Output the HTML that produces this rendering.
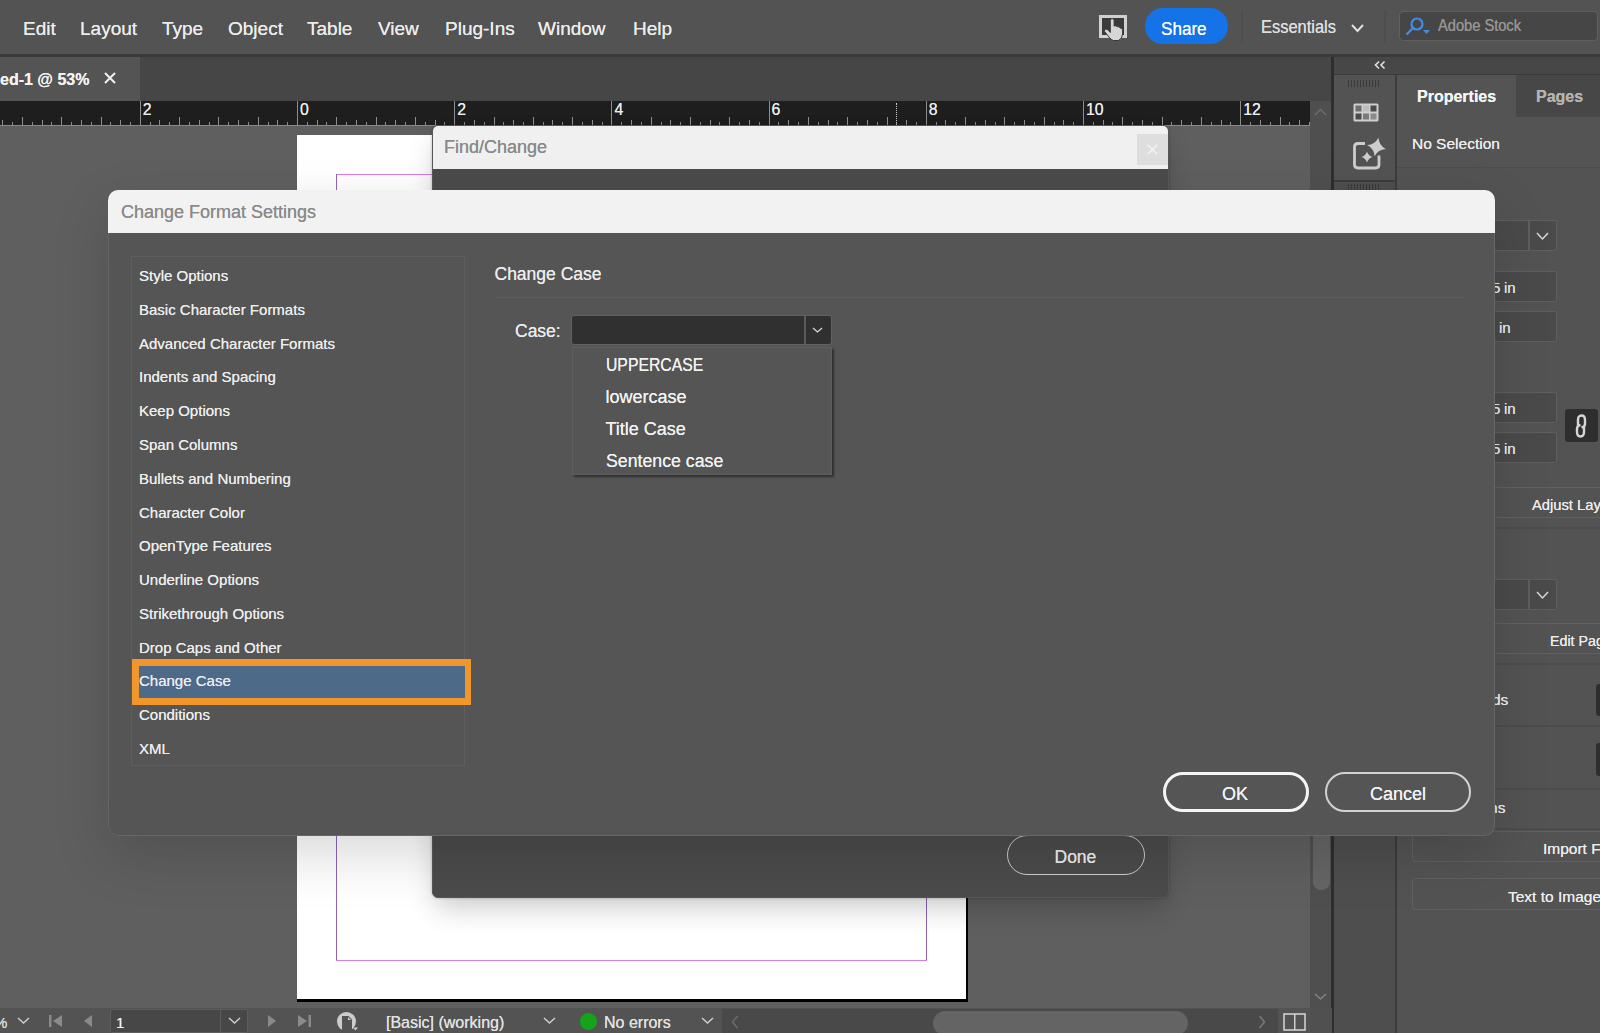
<!DOCTYPE html>
<html><head><meta charset="utf-8">
<style>
*{box-sizing:border-box;margin:0;padding:0}
html,body{width:1600px;height:1033px;overflow:hidden;background:#5e5e5e;font-family:"Liberation Sans", sans-serif;color:#e8e8e8}
.a{position:absolute}
.t{position:absolute;white-space:nowrap;line-height:1;text-shadow:0 0 .45px currentColor}
svg{position:absolute;overflow:visible}
</style></head><body>
<div class="a" style="left:0px;top:101px;width:1310px;height:910px;background:#5f5f5f;"></div>
<div class="a" style="left:297px;top:135px;width:671px;height:867px;background:#000;"></div>
<div class="a" style="left:297px;top:135px;width:669px;height:864px;background:#fff;"></div>
<div class="a" style="left:336px;top:174px;width:591px;height:1.3px;background:#e07af0;"></div>
<div class="a" style="left:336px;top:959.5px;width:591px;height:1px;background:#d27ee6;"></div>
<div class="a" style="left:335.8px;top:174px;width:1.2px;height:786px;background:#8e64b8;"></div>
<div class="a" style="left:925.8px;top:174px;width:1.2px;height:786px;background:#8e64b8;"></div>
<div class="a" style="left:0px;top:101px;width:1310px;height:25px;background:#1e1e1e;"></div>
<div class="a" style="left:2.25px;top:120.00px;width:1px;height:5px;background:#8e8e8e"></div><div class="a" style="left:12.08px;top:121.50px;width:1px;height:3.5px;background:#8e8e8e"></div><div class="a" style="left:21.90px;top:116.50px;width:1px;height:8.5px;background:#8e8e8e"></div><div class="a" style="left:31.73px;top:121.50px;width:1px;height:3.5px;background:#8e8e8e"></div><div class="a" style="left:41.55px;top:120.00px;width:1px;height:5px;background:#8e8e8e"></div><div class="a" style="left:51.38px;top:121.50px;width:1px;height:3.5px;background:#8e8e8e"></div><div class="a" style="left:61.20px;top:116.50px;width:1px;height:8.5px;background:#8e8e8e"></div><div class="a" style="left:71.03px;top:121.50px;width:1px;height:3.5px;background:#8e8e8e"></div><div class="a" style="left:80.85px;top:120.00px;width:1px;height:5px;background:#8e8e8e"></div><div class="a" style="left:90.68px;top:121.50px;width:1px;height:3.5px;background:#8e8e8e"></div><div class="a" style="left:100.50px;top:116.50px;width:1px;height:8.5px;background:#8e8e8e"></div><div class="a" style="left:110.33px;top:121.50px;width:1px;height:3.5px;background:#8e8e8e"></div><div class="a" style="left:120.15px;top:120.00px;width:1px;height:5px;background:#8e8e8e"></div><div class="a" style="left:129.98px;top:121.50px;width:1px;height:3.5px;background:#8e8e8e"></div><div class="a" style="left:139.80px;top:101.00px;width:1px;height:24px;background:#8e8e8e"></div><div class="a" style="left:149.62px;top:121.50px;width:1px;height:3.5px;background:#8e8e8e"></div><div class="a" style="left:159.45px;top:120.00px;width:1px;height:5px;background:#8e8e8e"></div><div class="a" style="left:169.28px;top:121.50px;width:1px;height:3.5px;background:#8e8e8e"></div><div class="a" style="left:179.10px;top:116.50px;width:1px;height:8.5px;background:#8e8e8e"></div><div class="a" style="left:188.93px;top:121.50px;width:1px;height:3.5px;background:#8e8e8e"></div><div class="a" style="left:198.75px;top:120.00px;width:1px;height:5px;background:#8e8e8e"></div><div class="a" style="left:208.57px;top:121.50px;width:1px;height:3.5px;background:#8e8e8e"></div><div class="a" style="left:218.40px;top:116.50px;width:1px;height:8.5px;background:#8e8e8e"></div><div class="a" style="left:228.23px;top:121.50px;width:1px;height:3.5px;background:#8e8e8e"></div><div class="a" style="left:238.05px;top:120.00px;width:1px;height:5px;background:#8e8e8e"></div><div class="a" style="left:247.88px;top:121.50px;width:1px;height:3.5px;background:#8e8e8e"></div><div class="a" style="left:257.70px;top:116.50px;width:1px;height:8.5px;background:#8e8e8e"></div><div class="a" style="left:267.52px;top:121.50px;width:1px;height:3.5px;background:#8e8e8e"></div><div class="a" style="left:277.35px;top:120.00px;width:1px;height:5px;background:#8e8e8e"></div><div class="a" style="left:287.18px;top:121.50px;width:1px;height:3.5px;background:#8e8e8e"></div><div class="a" style="left:297.00px;top:101.00px;width:1px;height:24px;background:#8e8e8e"></div><div class="a" style="left:306.82px;top:121.50px;width:1px;height:3.5px;background:#8e8e8e"></div><div class="a" style="left:316.65px;top:120.00px;width:1px;height:5px;background:#8e8e8e"></div><div class="a" style="left:326.48px;top:121.50px;width:1px;height:3.5px;background:#8e8e8e"></div><div class="a" style="left:336.30px;top:116.50px;width:1px;height:8.5px;background:#8e8e8e"></div><div class="a" style="left:346.12px;top:121.50px;width:1px;height:3.5px;background:#8e8e8e"></div><div class="a" style="left:355.95px;top:120.00px;width:1px;height:5px;background:#8e8e8e"></div><div class="a" style="left:365.77px;top:121.50px;width:1px;height:3.5px;background:#8e8e8e"></div><div class="a" style="left:375.60px;top:116.50px;width:1px;height:8.5px;background:#8e8e8e"></div><div class="a" style="left:385.43px;top:121.50px;width:1px;height:3.5px;background:#8e8e8e"></div><div class="a" style="left:395.25px;top:120.00px;width:1px;height:5px;background:#8e8e8e"></div><div class="a" style="left:405.07px;top:121.50px;width:1px;height:3.5px;background:#8e8e8e"></div><div class="a" style="left:414.90px;top:116.50px;width:1px;height:8.5px;background:#8e8e8e"></div><div class="a" style="left:424.73px;top:121.50px;width:1px;height:3.5px;background:#8e8e8e"></div><div class="a" style="left:434.55px;top:120.00px;width:1px;height:5px;background:#8e8e8e"></div><div class="a" style="left:444.38px;top:121.50px;width:1px;height:3.5px;background:#8e8e8e"></div><div class="a" style="left:454.20px;top:101.00px;width:1px;height:24px;background:#8e8e8e"></div><div class="a" style="left:464.02px;top:121.50px;width:1px;height:3.5px;background:#8e8e8e"></div><div class="a" style="left:473.85px;top:120.00px;width:1px;height:5px;background:#8e8e8e"></div><div class="a" style="left:483.67px;top:121.50px;width:1px;height:3.5px;background:#8e8e8e"></div><div class="a" style="left:493.50px;top:116.50px;width:1px;height:8.5px;background:#8e8e8e"></div><div class="a" style="left:503.32px;top:121.50px;width:1px;height:3.5px;background:#8e8e8e"></div><div class="a" style="left:513.15px;top:120.00px;width:1px;height:5px;background:#8e8e8e"></div><div class="a" style="left:522.98px;top:121.50px;width:1px;height:3.5px;background:#8e8e8e"></div><div class="a" style="left:532.80px;top:116.50px;width:1px;height:8.5px;background:#8e8e8e"></div><div class="a" style="left:542.62px;top:121.50px;width:1px;height:3.5px;background:#8e8e8e"></div><div class="a" style="left:552.45px;top:120.00px;width:1px;height:5px;background:#8e8e8e"></div><div class="a" style="left:562.27px;top:121.50px;width:1px;height:3.5px;background:#8e8e8e"></div><div class="a" style="left:572.10px;top:116.50px;width:1px;height:8.5px;background:#8e8e8e"></div><div class="a" style="left:581.92px;top:121.50px;width:1px;height:3.5px;background:#8e8e8e"></div><div class="a" style="left:591.75px;top:120.00px;width:1px;height:5px;background:#8e8e8e"></div><div class="a" style="left:601.58px;top:121.50px;width:1px;height:3.5px;background:#8e8e8e"></div><div class="a" style="left:611.40px;top:101.00px;width:1px;height:24px;background:#8e8e8e"></div><div class="a" style="left:621.22px;top:121.50px;width:1px;height:3.5px;background:#8e8e8e"></div><div class="a" style="left:631.05px;top:120.00px;width:1px;height:5px;background:#8e8e8e"></div><div class="a" style="left:640.88px;top:121.50px;width:1px;height:3.5px;background:#8e8e8e"></div><div class="a" style="left:650.70px;top:116.50px;width:1px;height:8.5px;background:#8e8e8e"></div><div class="a" style="left:660.52px;top:121.50px;width:1px;height:3.5px;background:#8e8e8e"></div><div class="a" style="left:670.35px;top:120.00px;width:1px;height:5px;background:#8e8e8e"></div><div class="a" style="left:680.17px;top:121.50px;width:1px;height:3.5px;background:#8e8e8e"></div><div class="a" style="left:690.00px;top:116.50px;width:1px;height:8.5px;background:#8e8e8e"></div><div class="a" style="left:699.83px;top:121.50px;width:1px;height:3.5px;background:#8e8e8e"></div><div class="a" style="left:709.65px;top:120.00px;width:1px;height:5px;background:#8e8e8e"></div><div class="a" style="left:719.47px;top:121.50px;width:1px;height:3.5px;background:#8e8e8e"></div><div class="a" style="left:729.30px;top:116.50px;width:1px;height:8.5px;background:#8e8e8e"></div><div class="a" style="left:739.12px;top:121.50px;width:1px;height:3.5px;background:#8e8e8e"></div><div class="a" style="left:748.95px;top:120.00px;width:1px;height:5px;background:#8e8e8e"></div><div class="a" style="left:758.77px;top:121.50px;width:1px;height:3.5px;background:#8e8e8e"></div><div class="a" style="left:768.60px;top:101.00px;width:1px;height:24px;background:#8e8e8e"></div><div class="a" style="left:778.42px;top:121.50px;width:1px;height:3.5px;background:#8e8e8e"></div><div class="a" style="left:788.25px;top:120.00px;width:1px;height:5px;background:#8e8e8e"></div><div class="a" style="left:798.08px;top:121.50px;width:1px;height:3.5px;background:#8e8e8e"></div><div class="a" style="left:807.90px;top:116.50px;width:1px;height:8.5px;background:#8e8e8e"></div><div class="a" style="left:817.72px;top:121.50px;width:1px;height:3.5px;background:#8e8e8e"></div><div class="a" style="left:827.55px;top:120.00px;width:1px;height:5px;background:#8e8e8e"></div><div class="a" style="left:837.38px;top:121.50px;width:1px;height:3.5px;background:#8e8e8e"></div><div class="a" style="left:847.20px;top:116.50px;width:1px;height:8.5px;background:#8e8e8e"></div><div class="a" style="left:857.02px;top:121.50px;width:1px;height:3.5px;background:#8e8e8e"></div><div class="a" style="left:866.85px;top:120.00px;width:1px;height:5px;background:#8e8e8e"></div><div class="a" style="left:876.67px;top:121.50px;width:1px;height:3.5px;background:#8e8e8e"></div><div class="a" style="left:886.50px;top:116.50px;width:1px;height:8.5px;background:#8e8e8e"></div><div class="a" style="left:896.32px;top:121.50px;width:1px;height:3.5px;background:#8e8e8e"></div><div class="a" style="left:906.15px;top:120.00px;width:1px;height:5px;background:#8e8e8e"></div><div class="a" style="left:915.97px;top:121.50px;width:1px;height:3.5px;background:#8e8e8e"></div><div class="a" style="left:925.80px;top:101.00px;width:1px;height:24px;background:#8e8e8e"></div><div class="a" style="left:935.62px;top:121.50px;width:1px;height:3.5px;background:#8e8e8e"></div><div class="a" style="left:945.45px;top:120.00px;width:1px;height:5px;background:#8e8e8e"></div><div class="a" style="left:955.27px;top:121.50px;width:1px;height:3.5px;background:#8e8e8e"></div><div class="a" style="left:965.10px;top:116.50px;width:1px;height:8.5px;background:#8e8e8e"></div><div class="a" style="left:974.92px;top:121.50px;width:1px;height:3.5px;background:#8e8e8e"></div><div class="a" style="left:984.75px;top:120.00px;width:1px;height:5px;background:#8e8e8e"></div><div class="a" style="left:994.57px;top:121.50px;width:1px;height:3.5px;background:#8e8e8e"></div><div class="a" style="left:1004.40px;top:116.50px;width:1px;height:8.5px;background:#8e8e8e"></div><div class="a" style="left:1014.22px;top:121.50px;width:1px;height:3.5px;background:#8e8e8e"></div><div class="a" style="left:1024.05px;top:120.00px;width:1px;height:5px;background:#8e8e8e"></div><div class="a" style="left:1033.88px;top:121.50px;width:1px;height:3.5px;background:#8e8e8e"></div><div class="a" style="left:1043.70px;top:116.50px;width:1px;height:8.5px;background:#8e8e8e"></div><div class="a" style="left:1053.53px;top:121.50px;width:1px;height:3.5px;background:#8e8e8e"></div><div class="a" style="left:1063.35px;top:120.00px;width:1px;height:5px;background:#8e8e8e"></div><div class="a" style="left:1073.17px;top:121.50px;width:1px;height:3.5px;background:#8e8e8e"></div><div class="a" style="left:1083.00px;top:101.00px;width:1px;height:24px;background:#8e8e8e"></div><div class="a" style="left:1092.82px;top:121.50px;width:1px;height:3.5px;background:#8e8e8e"></div><div class="a" style="left:1102.65px;top:120.00px;width:1px;height:5px;background:#8e8e8e"></div><div class="a" style="left:1112.47px;top:121.50px;width:1px;height:3.5px;background:#8e8e8e"></div><div class="a" style="left:1122.30px;top:116.50px;width:1px;height:8.5px;background:#8e8e8e"></div><div class="a" style="left:1132.12px;top:121.50px;width:1px;height:3.5px;background:#8e8e8e"></div><div class="a" style="left:1141.95px;top:120.00px;width:1px;height:5px;background:#8e8e8e"></div><div class="a" style="left:1151.78px;top:121.50px;width:1px;height:3.5px;background:#8e8e8e"></div><div class="a" style="left:1161.60px;top:116.50px;width:1px;height:8.5px;background:#8e8e8e"></div><div class="a" style="left:1171.42px;top:121.50px;width:1px;height:3.5px;background:#8e8e8e"></div><div class="a" style="left:1181.25px;top:120.00px;width:1px;height:5px;background:#8e8e8e"></div><div class="a" style="left:1191.07px;top:121.50px;width:1px;height:3.5px;background:#8e8e8e"></div><div class="a" style="left:1200.90px;top:116.50px;width:1px;height:8.5px;background:#8e8e8e"></div><div class="a" style="left:1210.72px;top:121.50px;width:1px;height:3.5px;background:#8e8e8e"></div><div class="a" style="left:1220.55px;top:120.00px;width:1px;height:5px;background:#8e8e8e"></div><div class="a" style="left:1230.38px;top:121.50px;width:1px;height:3.5px;background:#8e8e8e"></div><div class="a" style="left:1240.20px;top:101.00px;width:1px;height:24px;background:#8e8e8e"></div><div class="a" style="left:1250.03px;top:121.50px;width:1px;height:3.5px;background:#8e8e8e"></div><div class="a" style="left:1259.85px;top:120.00px;width:1px;height:5px;background:#8e8e8e"></div><div class="a" style="left:1269.67px;top:121.50px;width:1px;height:3.5px;background:#8e8e8e"></div><div class="a" style="left:1279.50px;top:116.50px;width:1px;height:8.5px;background:#8e8e8e"></div><div class="a" style="left:1289.32px;top:121.50px;width:1px;height:3.5px;background:#8e8e8e"></div><div class="a" style="left:1299.15px;top:120.00px;width:1px;height:5px;background:#8e8e8e"></div><div class="a" style="left:1308.97px;top:121.50px;width:1px;height:3.5px;background:#8e8e8e"></div>
<div class="t" style="left:142.8px;top:102.43px;font-size:15.8px;color:#ececec;font-weight:400;">2</div>
<div class="t" style="left:300.0px;top:102.43px;font-size:15.8px;color:#ececec;font-weight:400;">0</div>
<div class="t" style="left:457.2px;top:102.43px;font-size:15.8px;color:#ececec;font-weight:400;">2</div>
<div class="t" style="left:614.4px;top:102.43px;font-size:15.8px;color:#ececec;font-weight:400;">4</div>
<div class="t" style="left:771.5999999999999px;top:102.43px;font-size:15.8px;color:#ececec;font-weight:400;">6</div>
<div class="t" style="left:928.8px;top:102.43px;font-size:15.8px;color:#ececec;font-weight:400;">8</div>
<div class="t" style="left:1086.0px;top:102.43px;font-size:15.8px;color:#ececec;font-weight:400;">10</div>
<div class="t" style="left:1243.1999999999998px;top:102.43px;font-size:15.8px;color:#ececec;font-weight:400;">12</div>
<div class="a" style="left:896px;top:103px;width:1px;height:22px;border-left:1px dotted #cfcfcf"></div>
<div class="a" style="left:0px;top:125px;width:1310px;height:1px;background:#8a8a8a;"></div>
<div class="a" style="left:0px;top:0px;width:1600px;height:54px;background:#535353;"></div>
<div class="a" style="left:0px;top:54px;width:1600px;height:3px;background:#3a3a3a;"></div>
<div class="t" style="left:23px;top:18.92px;font-size:19px;color:#ececec;font-weight:400;">Edit</div>
<div class="t" style="left:80px;top:18.92px;font-size:19px;color:#ececec;font-weight:400;">Layout</div>
<div class="t" style="left:162px;top:18.92px;font-size:19px;color:#ececec;font-weight:400;">Type</div>
<div class="t" style="left:228px;top:18.92px;font-size:19px;color:#ececec;font-weight:400;">Object</div>
<div class="t" style="left:307px;top:18.92px;font-size:19px;color:#ececec;font-weight:400;">Table</div>
<div class="t" style="left:378px;top:18.92px;font-size:19px;color:#ececec;font-weight:400;">View</div>
<div class="t" style="left:445px;top:18.92px;font-size:19px;color:#ececec;font-weight:400;">Plug-Ins</div>
<div class="t" style="left:538px;top:18.92px;font-size:19px;color:#ececec;font-weight:400;">Window</div>
<div class="t" style="left:633px;top:18.92px;font-size:19px;color:#ececec;font-weight:400;">Help</div>
<div class="a" style="left:1145px;top:8px;width:83px;height:36px;background:#1473e6;border-radius:18px"></div>
<div class="t" style="left:1161px;top:18.92px;font-size:19px;color:#ffffff;font-weight:400;transform:scaleX(0.9);transform-origin:0 0;">Share</div>
<div class="a" style="left:1241px;top:10px;width:2px;height:33px;background:#4e4e4e;"></div>
<div class="t" style="left:1261px;top:16.92px;font-size:19px;color:#dedede;font-weight:400;transform:scaleX(0.866);transform-origin:0 0;">Essentials</div>
<div class="a" style="left:1384px;top:10px;width:2px;height:33px;background:#4e4e4e;"></div>
<svg style="left:1351px;top:24px" width="13" height="9" viewBox="0 0 13 9"><path d="M1 1 L6.5 7 L12 1" fill="none" stroke="#e0e0e0" stroke-width="2"/></svg>
<svg style="left:1098px;top:14px" width="31" height="26" viewBox="0 0 31 26"><rect x="2.5" y="2.5" width="25" height="20" fill="#3a3a3a" stroke="#d0d0d0" stroke-width="3"/><path d="M12.3 6.5 Q12.3 4.6 14.2 4.6 Q16.1 4.6 16.1 6.5 V12 Q18.3 11 19.2 12.8 Q21.3 12 22 14 Q24.3 13.6 24.6 16 V20 Q24.4 24.8 20.4 26.5 H15.4 Q12.8 26 11 23 L6.6 17.6 Q6 15.8 7.6 15.2 Q9.2 14.9 10.4 16.4 L12.3 18.5 Z" fill="#d6d6d6" stroke="#3a3a3a" stroke-width="1"/></svg>
<div class="a" style="left:1399px;top:11px;width:199px;height:30px;border:1.5px solid #606060;border-radius:4px;background:#464646"></div>
<div class="t" style="left:1438px;top:18.46px;font-size:16px;color:#959595;font-weight:400;transform:scaleX(0.915);transform-origin:0 0;">Adobe Stock</div>
<svg style="left:1404px;top:16px" width="28" height="20" viewBox="0 0 28 20"><circle cx="13" cy="8" r="5.5" fill="none" stroke="#3f8de6" stroke-width="2.2"/><path d="M9 12 L2.5 18.5" stroke="#3f8de6" stroke-width="2.4"/><path d="M19 14 L26 14 L22.5 18 Z" fill="#3f8de6"/></svg>
<div class="a" style="left:0px;top:57px;width:1332px;height:44px;background:#464646;"></div>
<div class="a" style="left:0px;top:57px;width:140px;height:44px;background:#545454;"></div>
<div class="t" style="left:0px;top:72.46px;font-size:16px;color:#f2f2f2;font-weight:700;">ed-1 @ 53%</div>
<svg style="left:104px;top:72px" width="12" height="12" viewBox="0 0 12 12"><path d="M1 1 L11 11 M11 1 L1 11" stroke="#f0f0f0" stroke-width="2"/></svg>
<div class="a" style="left:1310px;top:101px;width:22px;height:910px;background:#4f4f4f;"></div>
<div class="a" style="left:1313px;top:700px;width:17px;height:190px;background:#656565;border-radius:8px"></div>
<svg style="left:1314px;top:108px" width="13" height="8" viewBox="0 0 13 8"><path d="M1 7 L6.5 1.5 L12 7" fill="none" stroke="#6e6e6e" stroke-width="1.3"/></svg>
<svg style="left:1314px;top:993px" width="13" height="8" viewBox="0 0 13 8"><path d="M1 1 L6.5 6 L12 1" fill="none" stroke="#8a8a8a" stroke-width="1.2"/></svg>
<div class="a" style="left:1332px;top:57px;width:268px;height:976px;background:#545454;"></div>
<div class="a" style="left:1331px;top:57px;width:3px;height:976px;background:#2e2e2e;"></div>
<div class="a" style="left:1334px;top:57px;width:266px;height:17px;background:#474747;"></div>
<svg style="left:1374px;top:60px" width="12" height="10" viewBox="0 0 12 10"><path d="M5 1.5 L1.5 5 L5 8.5 M10.5 1.5 L7 5 L10.5 8.5" fill="none" stroke="#e0e0e0" stroke-width="1.6"/></svg>
<div class="a" style="left:1334px;top:74px;width:266px;height:1px;background:#3a3a3a;"></div>
<div class="a" style="left:1334px;top:75px;width:61px;height:105px;background:#535353;"></div>
<div class="a" style="left:1395px;top:75px;width:2px;height:958px;background:#3c3c3c;"></div>
<div class="a" style="left:1334px;top:180px;width:61px;height:2px;background:#3c3c3c;"></div>
<div class="a" style="left:1334px;top:182px;width:61px;height:851px;background:#4e4e4e;"></div>
<div class="a" style="left:1348px;top:80px;width:1px;height:7px;background:#3a3a3a"></div><div class="a" style="left:1351px;top:80px;width:1px;height:7px;background:#3a3a3a"></div><div class="a" style="left:1354px;top:80px;width:1px;height:7px;background:#3a3a3a"></div><div class="a" style="left:1357px;top:80px;width:1px;height:7px;background:#3a3a3a"></div><div class="a" style="left:1360px;top:80px;width:1px;height:7px;background:#3a3a3a"></div><div class="a" style="left:1363px;top:80px;width:1px;height:7px;background:#3a3a3a"></div><div class="a" style="left:1366px;top:80px;width:1px;height:7px;background:#3a3a3a"></div><div class="a" style="left:1369px;top:80px;width:1px;height:7px;background:#3a3a3a"></div><div class="a" style="left:1372px;top:80px;width:1px;height:7px;background:#3a3a3a"></div><div class="a" style="left:1375px;top:80px;width:1px;height:7px;background:#3a3a3a"></div><div class="a" style="left:1378px;top:80px;width:1px;height:7px;background:#3a3a3a"></div>
<div class="a" style="left:1348px;top:184px;width:1px;height:6px;background:#3a3a3a"></div><div class="a" style="left:1351px;top:184px;width:1px;height:6px;background:#3a3a3a"></div><div class="a" style="left:1354px;top:184px;width:1px;height:6px;background:#3a3a3a"></div><div class="a" style="left:1357px;top:184px;width:1px;height:6px;background:#3a3a3a"></div><div class="a" style="left:1360px;top:184px;width:1px;height:6px;background:#3a3a3a"></div><div class="a" style="left:1363px;top:184px;width:1px;height:6px;background:#3a3a3a"></div><div class="a" style="left:1366px;top:184px;width:1px;height:6px;background:#3a3a3a"></div><div class="a" style="left:1369px;top:184px;width:1px;height:6px;background:#3a3a3a"></div><div class="a" style="left:1372px;top:184px;width:1px;height:6px;background:#3a3a3a"></div><div class="a" style="left:1375px;top:184px;width:1px;height:6px;background:#3a3a3a"></div><div class="a" style="left:1378px;top:184px;width:1px;height:6px;background:#3a3a3a"></div>
<svg style="left:1353px;top:103px" width="26" height="19" viewBox="0 0 26 19"><rect x="0.5" y="0.5" width="25" height="18" rx="1.5" fill="#cfcfcf"/><rect x="2.5" y="2.5" width="6" height="6" fill="#6e6e6e"/><rect x="10" y="2.5" width="6" height="6" fill="#bdbdbd"/><rect x="17.5" y="2.5" width="6" height="6" fill="#4a4a4a"/><rect x="2.5" y="10.5" width="6" height="6" fill="#4a4a4a"/><rect x="10" y="10.5" width="6" height="6" fill="#7a7a7a"/><rect x="17.5" y="10.5" width="6" height="6" fill="#8a8a8a"/></svg>
<svg style="left:1350px;top:136px" width="38" height="36" viewBox="0 0 38 36"><path d="M15 7.5 H8 Q4.5 7.5 4.5 11 V28.5 Q4.5 32 8 32 H25.5 Q29 32 29 28.5 V19.5" fill="none" stroke="#cdcdcd" stroke-width="2.8"/><path d="M26.5 1.5 Q28.59 8.91 36.0 11 Q28.59 13.09 26.5 20.5 Q24.41 13.09 17.0 11 Q24.41 8.91 26.5 1.5 Z" fill="#cdcdcd" transform="rotate(12 26.5 11)"/><path d="M17 15.5 Q18.375 19.625 22.5 21 Q18.375 22.375 17 26.5 Q15.625 22.375 11.5 21 Q15.625 19.625 17 15.5 Z" fill="#cdcdcd"/></svg>
<div class="a" style="left:1397px;top:75px;width:203px;height:42px;background:#474747;"></div>
<div class="a" style="left:1397px;top:75px;width:119px;height:42px;background:#545454;"></div>
<div class="t" style="left:1417px;top:89.46px;font-size:16px;color:#f4f4f4;font-weight:700;">Properties</div>
<div class="t" style="left:1536px;top:89.46px;font-size:16px;color:#b4b4b4;font-weight:700;">Pages</div>
<div class="t" style="left:1412px;top:135.88px;font-size:15.5px;color:#ececec;font-weight:400;">No Selection</div>
<div class="a" style="left:1397px;top:167px;width:203px;height:1px;background:#4c4c4c;"></div>
<div class="a" style="left:1397px;top:168px;width:203px;height:865px;background:#535353;"></div>
<div class="a" style="left:1470px;top:220px;width:87px;height:31px;background:#4a4a4a;border:1.5px solid #5f5f5f;border-radius:3px"></div>
<div class="a" style="left:1528px;top:221px;width:1.5px;height:29px;background:#5f5f5f;"></div>
<svg style="left:1536px;top:232px" width="13" height="9" viewBox="0 0 13 9"><path d="M1 1 L6.5 7 L12 1" fill="none" stroke="#d8d8d8" stroke-width="1.5"/></svg>
<div class="a" style="left:1470px;top:271px;width:87px;height:31px;background:#4a4a4a;border:1.5px solid #5f5f5f;border-radius:3px"></div>
<div class="a" style="left:1470px;top:311px;width:87px;height:31px;background:#4a4a4a;border:1.5px solid #5f5f5f;border-radius:3px"></div>
<div class="a" style="left:1470px;top:392px;width:87px;height:31px;background:#4a4a4a;border:1.5px solid #5f5f5f;border-radius:3px"></div>
<div class="a" style="left:1470px;top:432px;width:87px;height:31px;background:#4a4a4a;border:1.5px solid #5f5f5f;border-radius:3px"></div>
<div class="t" style="left:1504px;top:280.30px;font-size:15px;color:#e8e8e8;font-weight:400;">in</div>
<div class="t" style="left:1492px;top:280.30px;font-size:15px;color:#e8e8e8;font-weight:400;">5</div>
<div class="t" style="left:1499px;top:320.30px;font-size:15px;color:#e8e8e8;font-weight:400;">in</div>
<div class="t" style="left:1504px;top:401.30px;font-size:15px;color:#e8e8e8;font-weight:400;">in</div>
<div class="t" style="left:1492px;top:401.30px;font-size:15px;color:#e8e8e8;font-weight:400;">5</div>
<div class="t" style="left:1504px;top:441.30px;font-size:15px;color:#e8e8e8;font-weight:400;">in</div>
<div class="t" style="left:1492px;top:441.30px;font-size:15px;color:#e8e8e8;font-weight:400;">5</div>
<div class="a" style="left:1565px;top:409px;width:33px;height:33px;background:#2e2e2e;border-radius:3px"></div>
<svg style="left:1572px;top:413px" width="18" height="26" viewBox="0 0 18 26"><path d="M6 12.5 V7 Q6 2.5 9.5 2.5 Q13 2.5 13 7 V11 Q13 13.5 9.5 14.5" fill="none" stroke="#d6d6d6" stroke-width="2.4"/><path d="M12 13 V19 Q12 23.5 8.5 23.5 Q5 23.5 5 19 V15.5 Q5 12.8 8.5 11.8" fill="none" stroke="#d6d6d6" stroke-width="2.4"/></svg>
<div class="a" style="left:1412px;top:487px;width:200px;height:31px;border:1.5px solid #616161;border-radius:3px"></div>
<div class="t" style="left:1532px;top:496.88px;font-size:15.5px;color:#ececec;font-weight:400;transform:scaleX(0.95);transform-origin:0 0;">Adjust Layout</div>
<div class="a" style="left:1397px;top:527px;width:203px;height:2px;background:#4c4c4c;"></div>
<div class="a" style="left:1470px;top:579px;width:87px;height:31px;background:#4a4a4a;border:1.5px solid #5f5f5f;border-radius:3px"></div>
<div class="a" style="left:1528px;top:580px;width:1.5px;height:29px;background:#5f5f5f;"></div>
<svg style="left:1536px;top:591px" width="13" height="9" viewBox="0 0 13 9"><path d="M1 1 L6.5 7 L12 1" fill="none" stroke="#d8d8d8" stroke-width="1.5"/></svg>
<div class="a" style="left:1412px;top:623px;width:200px;height:31px;border:1.5px solid #616161;border-radius:3px"></div>
<div class="t" style="left:1550px;top:632.88px;font-size:15.5px;color:#ececec;font-weight:400;transform:scaleX(0.92);transform-origin:0 0;">Edit Page</div>
<div class="a" style="left:1397px;top:663px;width:203px;height:2px;background:#4c4c4c;"></div>
<div class="t" style="left:1407.5px;top:691.88px;font-size:15.5px;color:#ececec;font-weight:400;">Rulers &amp; Grids</div>
<div class="a" style="left:1596px;top:684px;width:6px;height:32px;background:#2e2e2e;border-radius:3px"></div>
<div class="a" style="left:1397px;top:725px;width:203px;height:1.5px;background:#4c4c4c;"></div>
<div class="a" style="left:1596px;top:743px;width:6px;height:33px;background:#2e2e2e;border-radius:3px"></div>
<div class="a" style="left:1397px;top:788px;width:203px;height:1.5px;background:#4c4c4c;"></div>
<div class="t" style="left:1411.5px;top:799.88px;font-size:15.5px;color:#ececec;font-weight:400;">Quick Actions</div>
<div class="a" style="left:1397px;top:828px;width:203px;height:1.5px;background:#4c4c4c;"></div>
<div class="a" style="left:1412px;top:831px;width:200px;height:31px;border:1.5px solid #616161;border-radius:3px"></div>
<div class="t" style="left:1543px;top:840.88px;font-size:15.5px;color:#ececec;font-weight:400;">Import File</div>
<div class="a" style="left:1412px;top:878px;width:200px;height:32px;border:1.5px solid #616161;border-radius:3px"></div>
<div class="t" style="left:1508px;top:888.88px;font-size:15.5px;color:#ececec;font-weight:400;">Text to Image</div>
<div class="a" style="left:0px;top:1008px;width:1332px;height:25px;background:#535353;"></div>
<div class="a" style="left:110px;top:1009px;width:138px;height:24px;background:#474747;border:1px solid #5d5d5d;border-radius:2px"></div>
<div class="a" style="left:220px;top:1010px;width:1px;height:22px;background:#5d5d5d;"></div>
<div class="t" style="left:116px;top:1015.30px;font-size:15px;color:#f0f0f0;font-weight:400;">1</div>
<div class="t" style="left:0px;top:1015.30px;font-size:15px;color:#dcdcdc;font-weight:400;margin-left:-6px">%</div>
<svg style="left:17px;top:1017px" width="13" height="8" viewBox="0 0 13 8"><path d="M1 1 L6.5 6 L12 1" fill="none" stroke="#cfcfcf" stroke-width="1.5"/></svg>
<svg style="left:228px;top:1017px" width="13" height="8" viewBox="0 0 13 8"><path d="M1 1 L6.5 6 L12 1" fill="none" stroke="#cfcfcf" stroke-width="1.5"/></svg>
<svg style="left:543px;top:1017px" width="13" height="8" viewBox="0 0 13 8"><path d="M1 1 L6.5 6 L12 1" fill="none" stroke="#cfcfcf" stroke-width="1.5"/></svg>
<svg style="left:701px;top:1017px" width="13" height="8" viewBox="0 0 13 8"><path d="M1 1 L6.5 6 L12 1" fill="none" stroke="#cfcfcf" stroke-width="1.5"/></svg>
<svg style="left:48px;top:1013px" width="16" height="16" viewBox="0 0 16 16"><rect x="1" y="2" width="2.5" height="12" fill="#8a8a8a"/><path d="M14 2 L5 8 L14 14 Z" fill="#8a8a8a"/></svg>
<svg style="left:82px;top:1013px" width="12" height="16" viewBox="0 0 12 16"><path d="M10 2 L2 8 L10 14 Z" fill="#8a8a8a"/></svg>
<svg style="left:266px;top:1013px" width="12" height="16" viewBox="0 0 12 16"><path d="M2 2 L10 8 L2 14 Z" fill="#8a8a8a"/></svg>
<svg style="left:296px;top:1013px" width="16" height="16" viewBox="0 0 16 16"><path d="M2 2 L11 8 L2 14 Z" fill="#8a8a8a"/><rect x="12.5" y="2" width="2.5" height="12" fill="#8a8a8a"/></svg>
<svg style="left:335px;top:1010px" width="30" height="23" viewBox="0 0 30 23"><circle cx="11.5" cy="11.5" r="9.5" fill="#cccccc"/><path d="M7 6 H13.5 L17 9.5 V23 H7 Z" fill="#535353"/><path d="M13 7 L16 10 H13 Z" fill="#cccccc"/><path d="M18 17.5 H23 L20.5 20.5 Z" fill="#cccccc"/></svg>
<div class="t" style="left:386px;top:1015.46px;font-size:16px;color:#e2e2e2;font-weight:400;">[Basic] (working)</div>
<div class="a" style="left:580px;top:1013px;width:17px;height:17px;border-radius:50%;background:#16a31c"></div>
<div class="t" style="left:604px;top:1015.46px;font-size:16px;color:#e2e2e2;font-weight:400;">No errors</div>
<div class="a" style="left:722px;top:1009px;width:556px;height:24px;background:#494949;"></div>
<svg style="left:731px;top:1015px" width="8" height="14" viewBox="0 0 8 14"><path d="M6.5 1 L1.5 7 L6.5 13" fill="none" stroke="#6c6c6c" stroke-width="1.5"/></svg>
<svg style="left:1258px;top:1015px" width="8" height="14" viewBox="0 0 8 14"><path d="M1.5 1 L6.5 7 L1.5 13" fill="none" stroke="#7a7a7a" stroke-width="1.5"/></svg>
<div class="a" style="left:933px;top:1011px;width:255px;height:24px;background:#646464;border-radius:12px"></div>
<svg style="left:1283px;top:1013px" width="24" height="19" viewBox="0 0 24 19"><rect x="1" y="1" width="21" height="16" fill="none" stroke="#d0d0d0" stroke-width="1.6"/><rect x="11" y="1" width="1.5" height="16" fill="#d0d0d0"/></svg>
<div class="a" style="left:1310px;top:1008px;width:22px;height:25px;background:#505050;"></div>
<div class="a" style="left:432px;top:125px;width:737px;height:773px;background:#4b4b4b;border-radius:6px;overflow:hidden;box-shadow:0 14px 28px -4px rgba(0,0,0,.2),0 0 3px rgba(0,0,0,.25);border:1px solid #575757"><div class="a" style="left:0;top:0;width:737px;height:43px;background:#f0f0f0"></div></div>
<div class="t" style="left:444px;top:137.76px;font-size:18px;color:#8a8a8a;font-weight:400;">Find/Change</div>
<div class="a" style="left:1137px;top:134px;width:31px;height:31px;background:#dedede;"></div>
<svg style="left:1147px;top:144px" width="11" height="11" viewBox="0 0 11 11"><path d="M1 1 L10 10 M10 1 L1 10" stroke="#f2f2f2" stroke-width="1.6"/></svg>
<div class="a" style="left:1007px;top:835px;width:138px;height:40px;border:1.6px solid #cdcdcd;border-radius:20px"></div>
<div class="t" style="left:1054.5px;top:848.69px;font-size:17.5px;color:#ececec;font-weight:400;">Done</div>
<div class="a" style="left:108px;top:190px;width:1387px;height:646px;background:#555555;border-radius:10px;overflow:hidden;box-shadow:0 20px 55px rgba(0,0,0,.15)"><div class="a" style="left:0;top:43px;width:1387px;height:603px;border:1px solid #666;border-top:none;border-radius:0 0 10px 10px"></div><div class="a" style="left:0;top:0;width:1387px;height:43px;background:#f2f2f2"></div></div>
<div class="t" style="left:121px;top:202.76px;font-size:18px;color:#8a8a8a;font-weight:400;">Change Format Settings</div>
<div class="a" style="left:131px;top:256px;width:334px;height:510px;border:1px solid #5e5e5e"></div>
<div class="a" style="left:132px;top:659px;width:339px;height:46px;background:#f0962a;"></div>
<div class="a" style="left:139px;top:666px;width:326px;height:32px;background:#4e6a89;"></div>
<div class="t" style="left:139px;top:268.00px;font-size:15px;color:#ececec;font-weight:400;">Style Options</div>
<div class="t" style="left:139px;top:301.79px;font-size:15px;color:#ececec;font-weight:400;">Basic Character Formats</div>
<div class="t" style="left:139px;top:335.58px;font-size:15px;color:#ececec;font-weight:400;">Advanced Character Formats</div>
<div class="t" style="left:139px;top:369.37px;font-size:15px;color:#ececec;font-weight:400;">Indents and Spacing</div>
<div class="t" style="left:139px;top:403.16px;font-size:15px;color:#ececec;font-weight:400;">Keep Options</div>
<div class="t" style="left:139px;top:436.95px;font-size:15px;color:#ececec;font-weight:400;">Span Columns</div>
<div class="t" style="left:139px;top:470.74px;font-size:15px;color:#ececec;font-weight:400;">Bullets and Numbering</div>
<div class="t" style="left:139px;top:504.53px;font-size:15px;color:#ececec;font-weight:400;">Character Color</div>
<div class="t" style="left:139px;top:538.32px;font-size:15px;color:#ececec;font-weight:400;">OpenType Features</div>
<div class="t" style="left:139px;top:572.11px;font-size:15px;color:#ececec;font-weight:400;">Underline Options</div>
<div class="t" style="left:139px;top:605.90px;font-size:15px;color:#ececec;font-weight:400;">Strikethrough Options</div>
<div class="t" style="left:139px;top:639.69px;font-size:15px;color:#ececec;font-weight:400;">Drop Caps and Other</div>
<div class="t" style="left:139px;top:673.48px;font-size:15px;color:#ececec;font-weight:400;">Change Case</div>
<div class="t" style="left:139px;top:707.27px;font-size:15px;color:#ececec;font-weight:400;">Conditions</div>
<div class="t" style="left:139px;top:741.06px;font-size:15px;color:#ececec;font-weight:400;">XML</div>
<div class="t" style="left:494.5px;top:266.19px;font-size:17.5px;color:#ececec;font-weight:400;">Change Case</div>
<div class="a" style="left:495px;top:297px;width:970px;height:1px;background:#5d5d5d;"></div>
<div class="t" style="left:515px;top:323.49px;font-size:17.5px;color:#ececec;font-weight:400;">Case:</div>
<div class="a" style="left:571px;top:314.5px;width:261px;height:30.5px;background:#303030;border:1.5px solid #626262;border-radius:3px"></div>
<div class="a" style="left:804px;top:316px;width:1.5px;height:28px;background:#5a5a5a;"></div>
<svg style="left:812px;top:327px" width="11" height="7" viewBox="0 0 11 7"><path d="M1 1 L5.5 5 L10 1" fill="none" stroke="#d8d8d8" stroke-width="1.3"/></svg>
<div class="a" style="left:572px;top:347px;width:260px;height:128px;background:#555555;border:1px solid #5e5e5e;box-shadow:2px 2px 2px rgba(0,0,0,.45)"></div>
<div class="t" style="left:605.5px;top:355.76px;font-size:18px;color:#f2f2f2;font-weight:400;transform:scaleX(0.875);transform-origin:0 0;">UPPERCASE</div>
<div class="t" style="left:605.5px;top:387.76px;font-size:18px;color:#f2f2f2;font-weight:400;">lowercase</div>
<div class="t" style="left:605.5px;top:419.76px;font-size:18px;color:#f2f2f2;font-weight:400;">Title Case</div>
<div class="t" style="left:605.5px;top:451.76px;font-size:18px;color:#f2f2f2;font-weight:400;transform:scaleX(0.985);transform-origin:0 0;">Sentence case</div>
<div class="a" style="left:1163px;top:772px;width:146px;height:40px;border:3px solid #f4f4f4;border-radius:20px"></div>
<div class="t" style="left:1222px;top:784.76px;font-size:18px;color:#f2f2f2;font-weight:400;">OK</div>
<div class="a" style="left:1325px;top:772px;width:146px;height:40px;border:2px solid #d2d2d2;border-radius:20px"></div>
<div class="t" style="left:1370px;top:784.76px;font-size:18px;color:#f2f2f2;font-weight:400;">Cancel</div>
</body></html>
